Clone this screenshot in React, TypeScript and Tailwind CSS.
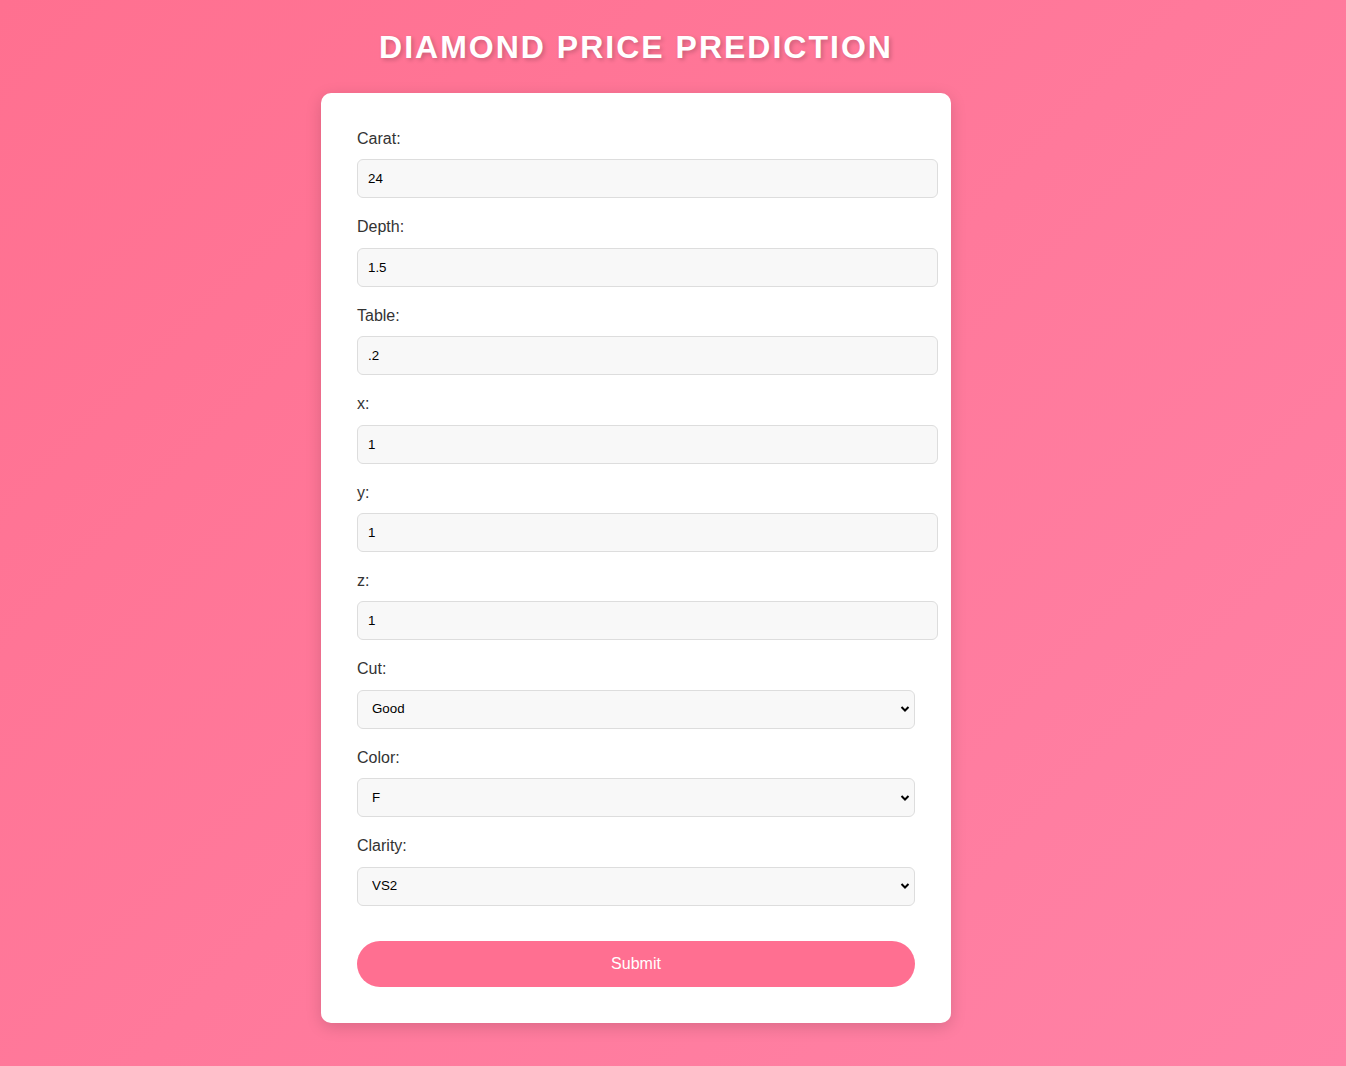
import { useState } from "react";

type Field = { name: string; label: string; value: string };

const inputFields: Field[] = [
  { name: "carat", label: "Carat:", value: "24" },
  { name: "depth", label: "Depth:", value: "1.5" },
  { name: "table", label: "Table:", value: ".2" },
  { name: "x", label: "x:", value: "1" },
  { name: "y", label: "y:", value: "1" },
  { name: "z", label: "z:", value: "1" },
];

const selectFields = [
  { name: "cut", label: "Cut:", value: "Good", options: ["Fair", "Good", "Very Good", "Premium", "Ideal"] },
  { name: "color", label: "Color:", value: "F", options: ["D", "E", "F", "G", "H", "I", "J"] },
  { name: "clarity", label: "Clarity:", value: "VS2", options: ["I1", "SI2", "SI1", "VS2", "VS1", "VVS2", "VVS1", "IF"] },
];

const Chevron = () => (
  <svg
    className="pointer-events-none absolute right-[5px] top-1/2 -translate-y-1/2"
    width="10"
    height="7"
    viewBox="0 0 10 7"
  >
    <path d="M1.5 1.5 L5 5 L8.5 1.5" fill="none" stroke="#000" strokeWidth="2" />
  </svg>
);

const App = () => {
  const [values, setValues] = useState<Record<string, string>>(() => {
    const init: Record<string, string> = {};
    inputFields.forEach((f) => (init[f.name] = f.value));
    selectFields.forEach((f) => (init[f.name] = f.value));
    return init;
  });

  const update = (name: string, v: string) =>
    setValues((prev) => ({ ...prev, [name]: v }));

  return (
    <div className="min-h-[1066px] w-full bg-[linear-gradient(135deg,#ff7090,#ff82a6)] font-['Liberation_Sans',Arial,sans-serif]">
      <div className="w-[1272px] flex flex-col items-center pt-[29px] pb-[43px]">
        <h1 className="text-[32px] leading-[37px] font-bold text-white tracking-[2px] [text-shadow:2px_2px_4px_rgba(0,0,0,0.2)] mb-[27px]">
          DIAMOND PRICE PREDICTION
        </h1>

        <form
          className="w-[630px] bg-white rounded-[10px] p-[36px] shadow-[0_4px_16px_rgba(0,0,0,0.15)]"
          onSubmit={(e) => e.preventDefault()}
        >
          {inputFields.map((f) => (
            <div key={f.name} className="mb-[19px]">
              <label className="block text-[16px] leading-[18.4px] text-[#333] pt-[1px] mb-[11px]">
                {f.label}
              </label>
              <input
                type="text"
                value={values[f.name]}
                onChange={(e) => update(f.name, e.target.value)}
                className="block w-[581px] h-[39px] px-[10px] text-[13.33px] text-black bg-[#f8f8f8] border border-[#ddd] rounded-[6px] outline-none"
              />
            </div>
          ))}

          {selectFields.map((f) => (
            <div key={f.name} className="mb-[19px]">
              <label className="block text-[16px] leading-[18.4px] text-[#333] pt-[1px] mb-[11px]">
                {f.label}
              </label>
              <div className="relative w-[558px]">
                <select
                  value={values[f.name]}
                  onChange={(e) => update(f.name, e.target.value)}
                  className="block appearance-none w-full h-[39px] pl-[14px] pr-[24px] text-[13.33px] text-black bg-[#f8f8f8] border border-[#ddd] rounded-[6px] outline-none"
                >
                  {f.options.map((o) => (
                    <option key={o} value={o}>
                      {o}
                    </option>
                  ))}
                </select>
                <Chevron />
              </div>
            </div>
          ))}

          <button
            type="submit"
            className="mt-[16px] w-[558px] h-[46px] rounded-full bg-[#ff6f91] text-white text-[16px] border-none"
          >
            Submit
          </button>
        </form>
      </div>
    </div>
  );
};

export default App;
